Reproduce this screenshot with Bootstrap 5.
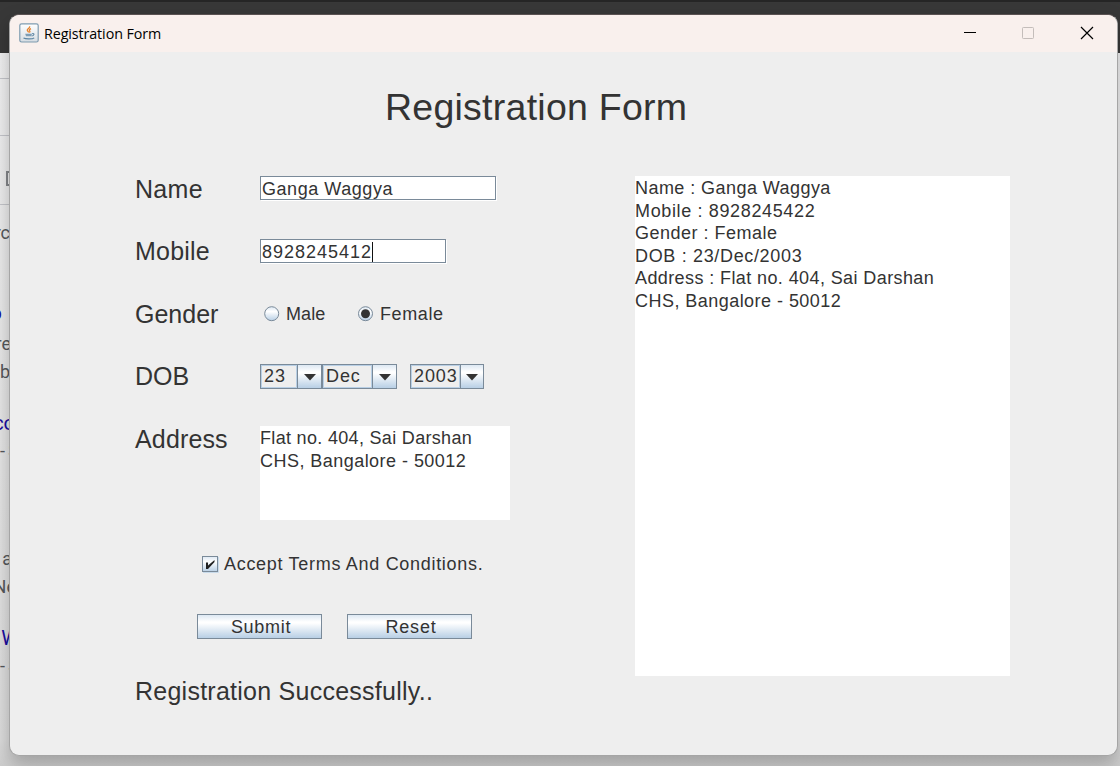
<!DOCTYPE html>
<html lang="en">
<head>
<meta charset="utf-8">
<meta name="viewport" content="width=device-width, initial-scale=1">
<title>Registration Form</title>
<link rel="stylesheet" href="https://cdn.jsdelivr.net/npm/bootstrap@5.3.0/dist/css/bootstrap.min.css">
<style>
  body { width: 1120px; height: 766px; background: #e2e2e2; color: #333; font-family: "Liberation Sans", Arial, sans-serif; font-size: 18px; line-height: 22.5px; }
  /* browser page behind the window */
  .backdrop-page { inset: 0; background: linear-gradient(#f0f0f1 53px, #e6e6e6 400px, #dcdcdc 740px, #cecece 766px); }
  .backdrop-bar { height: 53px; background: #383838; border-top: 2px solid #252525; }
  .backdrop-page i { position: absolute; left: 0; width: 10px; height: 1px; background: #c4c5ca; }
  .backdrop-page span { position: absolute; right: 1110px; font: 18px/24px Roboto, sans-serif; color: #55585c; white-space: pre; }
  .backdrop-page span.lnk { color: #1a0da0; font-size: 20px; }
  .bit-box { position: absolute; left: 6px; top: 171px; width: 7px; height: 15px; border: 2px solid #84868a; }

  .app-window { margin: 14px 0 0 9px; width: 1109px; height: 742px; background: #eee; border: 1px solid #a5a5a5; border-top-color: #5a5252; border-radius: 10px; box-shadow: 0 8px 18px rgba(0,0,0,.25); overflow: hidden; }
  .title-strip { height: 37px; background: #f9f0ed; color: #000; font: 14.3px/20px "Open Sans", sans-serif; padding: 0 1px 2px 9px; }
  .title-strip .caption-text { margin-left: 5px; letter-spacing: -.1px; padding-top: 2px; }
  .win-btn { width: 58.5px; }
  .client { padding-left: 125px; }
  h1.heading { font-size: 37.5px; line-height: 44px; letter-spacing: .25px; margin: 33px 0 0 250px; font-weight: 400; }
  .form-side { width: 375px; }
  .line { height: 62.5px; }
  .cap { width: 125px; font-size: 25px; line-height: 26px; flex: none; }
  .cap-up { margin-top: -1px; }
  .txt { border: 1px solid #7a8a99; background: #fff; box-shadow: 1px 1px 0 #fff; height: 24px; padding: 0 0 0 1px; line-height: 24px; white-space: nowrap; }
  .caret { display: inline-block; width: 1px; height: 20px; background: #111; vertical-align: -4px; }
  .combo { height: 25px; border: 1px solid #7a8a99; background: #eee; white-space: nowrap; }
  .combo .val { border: 1px solid #b8cfe5; padding-left: 2px; line-height: 20px; letter-spacing: .9px; overflow: hidden; }
  .combo .arr { width: 25px; border-left: 1px solid #7a8a99; }
  .metal { background: linear-gradient(#dde8f3 0, #fff 30%, #fff 35%, #b8cfe5 100%); }
  .metal-btn { width: 125px; height: 25px; border: 1px solid #7a8a99; border-radius: 0; padding: 1px 0 0 3px; color: #333; font-size: 18px; line-height: 22px; }
  .area { width: 250px; height: 94px; background: #fff; padding-top: 1px; }
  .result { width: 375px; height: 500px; background: #fff; margin-left: 125px; padding-top: 1px; }
  .text-run { display: block; white-space: nowrap; }
  svg { display: block; flex: none; }
</style>
</head>
<body class="position-relative overflow-hidden">
<div class="backdrop-page position-absolute overflow-hidden">
  <div class="backdrop-bar"></div>
  <i style="top:78px"></i><i style="top:135px"></i><i style="top:204px"></i>
  <b class="bit-box"></b>
  <span style="top:221px">rc</span>
  <span class="lnk" style="top:301px;right:1118px">o</span>
  <span style="top:332px;right:1109px">re</span>
  <span style="top:360px">b</span>
  <span class="lnk" style="top:411px;right:1105px">co</span>
  <span style="top:439px;right:1115px">-</span><span style="top:439px;right:1101px">S</span>
  <span style="top:547px;right:1108px">a</span>
  <span style="top:575px;right:1104px">Ne</span>
  <span class="lnk" style="top:626px;right:1101px">W</span>
  <span style="top:654px;right:1115px">-</span><span style="top:654px;right:1101px">S</span>
</div>

<div class="app-window position-relative">
  <header class="title-strip d-flex align-items-center">
    <svg width="20" height="20" viewBox="0 0 20 20">
      <defs><linearGradient id="ib" x2="0" y2="1"><stop stop-color="#fff"/><stop offset="1" stop-color="#d5dce2"/></linearGradient></defs>
      <rect x=".8" y=".8" width="18.4" height="18.2" rx="1.8" fill="url(#ib)" stroke="#7e9bb0" stroke-width="1.2"/>
      <path d="M10.600 3.200c.8 1.800-2.700 2.600-2.300 4.100.2.800 1.300 1.300 1.300 2.300M12 5.600c-1.300.6-2.100 1.300-1.300 2.200.5.600.2 1.200-.3 1.700" fill="none" stroke="#e8842f" stroke-width="1.300"/>
      <path d="M6.200 10.700h6.800l-.7 2.600H7z" fill="#7d9db5"/>
      <path d="M4.500 15c2 1.200 9.200 1.200 10.700-.2M13.200 10.600c2.500-.5 2.300 2-.5 2.400" fill="none" stroke="#5c85a3" stroke-width="1.100"/>
    </svg>
    <span class="caption-text">Registration Form</span>
    <div class="d-flex ms-auto">
      <div class="win-btn d-flex justify-content-center"><svg width="14" height="14"><path d="M1 6.500h12" stroke="#000"/></svg></div>
      <div class="win-btn d-flex justify-content-center"><svg width="14" height="14"><rect x="1.500" y="1.500" width="11" height="11" rx=".8" fill="none" stroke="#c4bdba"/></svg></div>
      <div class="win-btn d-flex justify-content-center"><svg width="14" height="14"><path d="M1 1l12 12M13 1L1 13" stroke="#000" stroke-width="1.200"/></svg></div>
    </div>
  </header>

  <main class="client">
    <h1 class="heading">Registration Form</h1>
    <div class="d-flex" style="margin-top:47px">
      <form class="form-side">
        <div class="line d-flex"><div class="cap" style="letter-spacing:.3px">Name</div><div class="txt" style="width:236px;letter-spacing:.550px">Ganga Waggya</div></div>
        <div class="line d-flex"><div class="cap cap-up" style="letter-spacing:.2px">Mobile</div><div class="txt" style="width:186px;letter-spacing:1px">8928245412<span class="caret"></span></div></div>
        <div class="line d-flex"><div class="cap">Gender</div>
          <div class="d-flex align-items-center" style="height:26px">
            <svg width="16" height="16" style="margin-left:4px"><defs><linearGradient id="rg" x2="0" y2="1"><stop stop-color="#dde8f3"/><stop offset=".35" stop-color="#fff"/><stop offset="1" stop-color="#b8cfe5"/></linearGradient></defs><circle cx="7.700" cy="7.700" r="7" fill="url(#rg)" stroke="#7a8a99"/></svg>
            <span style="margin-left:6px;width:39px;letter-spacing:.1px">Male</span>
            <svg width="16" height="16" style="margin-left:33px"><circle cx="7.500" cy="7.700" r="7" fill="url(#rg)" stroke="#7a8a99"/><circle cx="7.500" cy="7.700" r="4.500" fill="#333"/></svg>
            <span style="margin-left:6px;letter-spacing:.6px">Female</span>
          </div>
        </div>
        <div class="line d-flex"><div class="cap cap-up">DOB</div>
          <div class="combo d-flex" style="width:62px"><div class="val flex-fill">23</div><div class="arr metal" style="width:24px"><svg width="23" height="23"><path d="M6 9h12l-6 6.500z" fill="#333"/></svg></div></div>
          <div class="combo d-flex" style="width:75px"><div class="val flex-fill">Dec</div><div class="arr metal" style="width:24px"><svg width="23" height="23"><path d="M6 9h12l-6 6.500z" fill="#333"/></svg></div></div>
          <div class="combo d-flex" style="width:74px;margin-left:13px"><div class="val flex-fill">2003</div><div class="arr metal" style="width:23px"><svg width="22" height="23"><path d="M5 9h12l-6 6.500z" fill="#333"/></svg></div></div>
        </div>
        <div class="d-flex"><div class="cap" style="letter-spacing:.15px">Address</div>
          <div class="area"><span class="text-run" style="letter-spacing:.320px">Flat no. 404, Sai Darshan</span><span class="text-run" style="letter-spacing:.460px">CHS, Bangalore - 50012</span></div>
        </div>
        <div class="d-flex align-items-center" style="margin:31px 0 0 67px;height:26px">
          <svg width="17" height="17"><rect x=".5" y=".5" width="15" height="15" fill="url(#rg)" stroke="#7a8a99"/><path d="M16.500 1v15.500H1" fill="none" stroke="#c8daea"/><path d="M4 6.500h2v3L12.500 4v2L6 13H4z" fill="#222"/></svg>
          <span class="text-nowrap" style="margin-left:5px;letter-spacing:.7px">Accept Terms And Conditions.</span>
        </div>
        <div class="d-flex" style="margin:37px 0 0 62px;gap:25px">
          <button type="button" class="btn metal metal-btn" style="letter-spacing:.7px">Submit</button>
          <button type="button" class="btn metal metal-btn" style="letter-spacing:.8px">Reset</button>
        </div>
        <div class="cap text-nowrap" style="margin-top:39px;letter-spacing:.25px">Registration Successfully..</div>
      </form>
      <output class="result">
        <span class="text-run" style="letter-spacing:.440px">Name : Ganga Waggya</span>
        <span class="text-run" style="letter-spacing:.640px">Mobile : 8928245422</span>
        <span class="text-run" style="letter-spacing:.5px">Gender : Female</span>
        <span class="text-run" style="letter-spacing:.660px">DOB : 23/Dec/2003</span>
        <span class="text-run" style="letter-spacing:.4px">Address : Flat no. 404, Sai Darshan</span>
        <span class="text-run" style="letter-spacing:.460px">CHS, Bangalore - 50012</span>
      </output>
    </div>
  </main>
</div>
<script src="https://cdn.jsdelivr.net/npm/bootstrap@5.3.0/dist/js/bootstrap.bundle.min.js"></script>
</body>
</html>
